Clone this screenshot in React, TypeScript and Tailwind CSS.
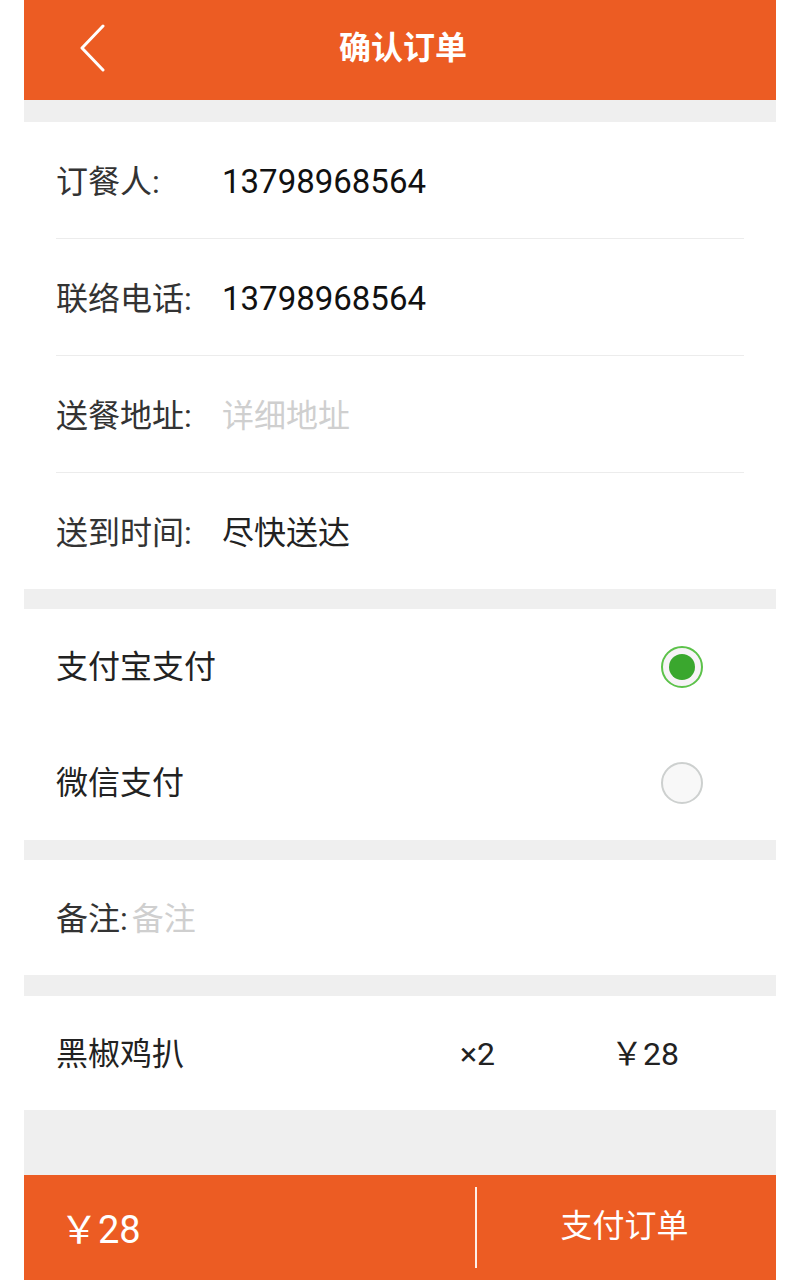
import React, { useState } from "react";

const Divider = () => <div className="h-px bg-[#ececec] mx-8" />;

const Gap = ({ h = "h-5" }: { h?: string }) => <div className={`${h} bg-[#efefef]`} />;

interface RowProps {
  label: string;
  value: string;
  placeholder?: boolean;
  valueClass?: string;
}

const InfoRow: React.FC<RowProps> = ({ label, value, placeholder, valueClass }) => (
  <div className="h-[116px] flex items-center px-8 text-[32px] pt-[3px]">
    <span className="text-[#333] w-[166px] shrink-0">{label}</span>
    <span className={placeholder ? "text-[#cfcfcf]" : valueClass || "text-[#111] text-[33px]"}>{value}</span>
  </div>
);

const Radio = ({ checked }: { checked: boolean }) =>
  checked ? (
    <div className="w-[42px] h-[42px] rounded-full border-2 border-[#5cc24a] bg-[#f7f3f7] flex items-center justify-center">
      <div className="w-[26px] h-[26px] rounded-full bg-[#3aa72e]" />
    </div>
  ) : (
    <div className="w-[42px] h-[42px] rounded-full border-2 border-[#cdd0cf] bg-[#f8f8f8]" />
  );

export default function App() {
  const [pay, setPay] = useState("alipay");

  return (
    <div
      className="w-[800px] h-[1280px] bg-white px-6 overflow-hidden"
      style={{ fontFamily: "Roboto, 'Noto Sans CJK SC', sans-serif" }}
    >
      <div className="h-full flex flex-col bg-[#efefef]">
        <div className="h-[100px] shrink-0 bg-[#ec5c23] relative flex items-center justify-center">
          <svg className="absolute left-[54px] top-[24px]" width="28" height="48" viewBox="0 0 28 48">
            <path d="M25 2 L4 24 L25 46" fill="none" stroke="white" strokeWidth="3" strokeLinecap="round" strokeLinejoin="round" />
          </svg>
          <span className="text-white text-[32px] font-bold ml-[6px] pb-[4px]">确认订单</span>
        </div>

        <Gap h="h-[22px]" />

        <div className="bg-white">
          <InfoRow label="订餐人:" value="13798968564" />
          <Divider />
          <InfoRow label="联络电话:" value="13798968564" />
          <Divider />
          <InfoRow label="送餐地址:" value="详细地址" placeholder />
          <Divider />
          <InfoRow label="送到时间:" value="尽快送达" valueClass="text-[#222]" />
        </div>

        <Gap />

        <div className="bg-white">
          <div
            className="h-[116px] flex items-center justify-between pl-8 pr-[73px] text-[32px] text-[#222]"
            onClick={() => setPay("alipay")}
          >
            <span>支付宝支付</span>
            <Radio checked={pay === "alipay"} />
          </div>
          <div
            className="h-[115px] flex items-center justify-between pl-8 pr-[73px] text-[32px] text-[#222]"
            onClick={() => setPay("wechat")}
          >
            <span>微信支付</span>
            <Radio checked={pay === "wechat"} />
          </div>
        </div>

        <Gap />

        <div className="bg-white h-[115px] flex items-center px-8 text-[32px] pt-[3px]">
          <span className="text-[#333]">备注:</span>
          <span className="text-[#cfcfcf] ml-[4px]">备注</span>
        </div>

        <Gap h="h-[21px]" />

        <div className="bg-white h-[114px] flex items-center px-8 text-[32px] text-[#222] pt-[2px]">
          <span className="w-[404px]">黑椒鸡扒</span>
          <span className="w-[151px]">×2</span>
          <span>￥28</span>
        </div>

        <div className="flex-1" />

        <div className="h-[105px] shrink-0 bg-[#ec5c23] flex items-center text-white">
          <div className="w-[451px] pl-[36px] text-[38px] pt-[6px]">￥28</div>
          <div className="w-[2px] h-[81px] bg-white/90" />
          <div className="flex-1 text-center text-[32px] pr-[4px] pb-[4px]">支付订单</div>
        </div>
      </div>
    </div>
  );
}
